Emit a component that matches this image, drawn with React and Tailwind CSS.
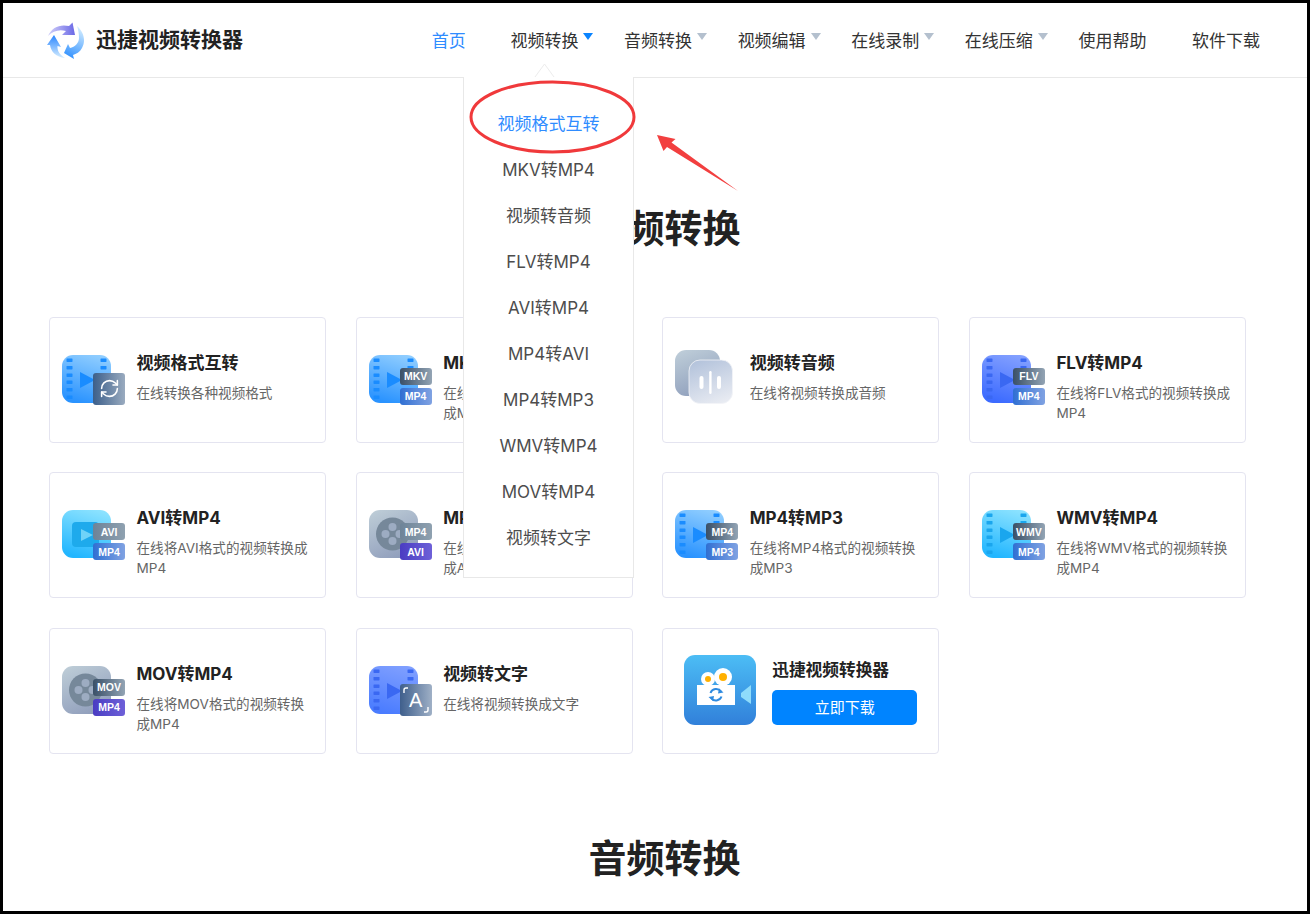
import React from "react";
import { RefreshCw } from "lucide-react";

const FONT = "font-['Inter','Noto_Sans_CJK_SC','Liberation_Sans',sans-serif]";

const palettes = {
  blue: ["#8fcdff", "#2a93ff", "#1a8cff"],
  indigo: ["#83a0ff", "#3c6bff", "#3a68f2"],
  cyan: ["#8be2ff", "#22b6ff", "#1aa6ee"],
  periwinkle: ["#7f9fff", "#4a7cff", "#3a68f2"],
};

function Film({ p }) {
  const [a, b, c] = palettes[p];
  const id = "f" + p;
  const ys = [3.5, 11, 18.5, 25.5, 33, 40.5];
  return (
    <svg width="49" height="48" viewBox="0 0 49 48" className="block">
      <defs>
        <linearGradient id={id} x1="0.7" y1="0" x2="0.4" y2="1">
          <stop offset="0" stopColor={a} />
          <stop offset="1" stopColor={b} />
        </linearGradient>
      </defs>
      <rect width="49" height="48" rx="11" fill={`url(#${id})`} />
      {ys.map((y) => (
        <rect key={y} x="4.5" y={y} width="6" height="3.4" rx="0.6" fill={c} />
      ))}
      {ys.map((y) => (
        <rect key={"r" + y} x="38.5" y={y} width="6" height="3.4" rx="0.6" fill={c} />
      ))}
      <path d="M18 17 L33 25 L18 33 Z" fill={c} />
    </svg>
  );
}

function CyanPlay() {
  return (
    <svg width="49" height="48" viewBox="0 0 49 48" className="block">
      <defs>
        <linearGradient id="cp" x1="0.7" y1="0" x2="0.4" y2="1">
          <stop offset="0" stopColor="#8be2ff" />
          <stop offset="1" stopColor="#22b6ff" />
        </linearGradient>
      </defs>
      <rect width="49" height="48" rx="11" fill="url(#cp)" />
      <rect x="10" y="12" width="27" height="25" rx="4" fill="#1eaaec" />
      <path d="M19 19 L31 25 L19 31 Z" fill="#6fd3f8" />
    </svg>
  );
}

function Reel() {
  return (
    <svg width="49" height="48" viewBox="0 0 49 48" className="block">
      <defs>
        <linearGradient id="rl" x1="0.2" y1="0" x2="0.7" y2="1">
          <stop offset="0" stopColor="#bccbd6" />
          <stop offset="1" stopColor="#8f9dbb" />
        </linearGradient>
      </defs>
      <rect width="49" height="48" rx="11" fill="url(#rl)" />
      <circle cx="23.5" cy="24" r="16.5" fill="#76889a" />
      <circle cx="23.5" cy="17" r="4" fill="#9dacc2" />
      <circle cx="16.5" cy="24" r="4" fill="#9dacc2" />
      <circle cx="23.5" cy="31" r="4" fill="#9dacc2" />
      <circle cx="30.5" cy="24" r="4" fill="#9dacc2" />
    </svg>
  );
}

function AudioIcon() {
  return (
    <svg width="58" height="54" viewBox="0 0 58 54" className="block -mt-[5px]">
      <defs>
        <linearGradient id="a1" x1="0.2" y1="0" x2="0.6" y2="1">
          <stop offset="0" stopColor="#bdccd8" />
          <stop offset="1" stopColor="#8f9fbc" />
        </linearGradient>
        <linearGradient id="a2" x1="0.3" y1="0" x2="0.7" y2="1">
          <stop offset="0" stopColor="#b5c4dc" />
          <stop offset="1" stopColor="#e8ebf2" />
        </linearGradient>
      </defs>
      <rect width="45" height="46" rx="11" fill="url(#a1)" />
      <rect x="14" y="10" width="43.5" height="43.5" rx="11" fill="url(#a2)" stroke="#f2f4f8" strokeWidth="0.8" />
      <rect x="24.5" y="26" width="4" height="13" rx="2" fill="#fff" />
      <rect x="34.2" y="21" width="2.4" height="23" rx="1.2" fill="#fff" />
      <rect x="42" y="26" width="4" height="13" rx="2" fill="#fff" />
    </svg>
  );
}

function Tag({ children, tone, className }) {
  const tones = {
    slate: "bg-gradient-to-r from-[#3a5068] to-[#93a4b4]",
    grey: "bg-gradient-to-r from-[#6d8398] to-[#8fa1b0]",
    blue: "bg-gradient-to-r from-[#2f6fd2] to-[#80a2e2]",
    violet: "bg-gradient-to-r from-[#4a3cc2] to-[#6e60d8]",
  };
  return (
    <div
      className={`absolute left-[31px] w-[32px] h-[17px] rounded-[3px] flex items-center justify-center text-white font-bold text-[10.5px] leading-none font-['Liberation_Sans',sans-serif] ${tones[tone]} ${className}`}
    >
      {children}
    </div>
  );
}

function TextBadge() {
  return (
    <div className="absolute left-[31px] top-[18px] w-[32px] h-[32px] rounded-[3px] bg-gradient-to-r from-[#3f5f8c] to-[#9fb0c6] flex items-center justify-center text-white text-[20px] leading-none font-['Liberation_Sans',sans-serif]">
      A
      <svg className="absolute inset-0" width="32" height="32" viewBox="0 0 32 32" fill="none" stroke="#fff" strokeWidth="1.4">
        <path d="M4 9 V6 Q4 4 6 4 H8" />
        <path d="M28 23 V26 Q28 28 26 28 H24" />
      </svg>
    </div>
  );
}

function RefreshBadge() {
  return (
    <div className="absolute left-[31px] top-[18px] w-[32px] h-[32px] rounded-[3px] bg-gradient-to-r from-[#3c5f8a] to-[#9aabbf] flex items-center justify-center">
      <RefreshCw size={21} color="#fff" strokeWidth={1.8} />
    </div>
  );
}

function Icon({ kind }) {
  const pair = (base, t1, t2, tone1 = "slate", tone2 = "blue") => (
    <>
      {base}
      <Tag tone={tone1} className="top-[13px]">{t1}</Tag>
      <Tag tone={tone2} className="top-[33px]">{t2}</Tag>
    </>
  );
  let inner;
  switch (kind) {
    case "format":
      inner = (<><Film p="blue" /><RefreshBadge /></>);
      break;
    case "mkv":
      inner = pair(<Film p="blue" />, "MKV", "MP4");
      break;
    case "audio":
      inner = <AudioIcon />;
      break;
    case "flv":
      inner = pair(<Film p="indigo" />, "FLV", "MP4");
      break;
    case "avi":
      inner = pair(<CyanPlay />, "AVI", "MP4", "grey");
      break;
    case "m4avi":
      inner = pair(<Reel />, "MP4", "AVI", "grey", "violet");
      break;
    case "m4mp3":
      inner = pair(<Film p="blue" />, "MP4", "MP3");
      break;
    case "wmv":
      inner = pair(<Film p="cyan" />, "WMV", "MP4");
      break;
    case "mov":
      inner = pair(<Reel />, "MOV", "MP4", "slate", "violet");
      break;
    default:
      inner = (<><Film p="periwinkle" /><TextBadge /></>);
  }
  return <div className="relative w-[63px] h-[50px] mt-[6px] shrink-0">{inner}</div>;
}

const cards = [
  ["format", "视频格式互转", "在线转换各种视频格式"],
  ["mkv", "MKV转MP4", "在线将MKV格式的视频转换成MP4"],
  ["audio", "视频转音频", "在线将视频转换成音频"],
  ["flv", "FLV转MP4", "在线将FLV格式的视频转换成MP4"],
  ["avi", "AVI转MP4", "在线将AVI格式的视频转换成MP4"],
  ["m4avi", "MP4转AVI", "在线将MP4格式的视频转换成AVI"],
  ["m4mp3", "MP4转MP3", "在线将MP4格式的视频转换成MP3"],
  ["wmv", "WMV转MP4", "在线将WMV格式的视频转换成MP4"],
  ["mov", "MOV转MP4", "在线将MOV格式的视频转换成MP4"],
  ["text", "视频转文字", "在线将视频转换成文字"],
];

function Card({ kind, title, desc }) {
  return (
    <div className="h-[126px] border border-[#e4e4f0] rounded-[4px] bg-white flex pl-[12px] pt-[31px]">
      <Icon kind={kind} />
      <div className="ml-[11.5px] w-[178px] pt-[2px]">
        <div className="text-[17px] leading-[24px] font-bold text-[#222]">{title}</div>
        <div className="mt-[8px] text-[13.6px] leading-[20px] text-[#666]">{desc}</div>
      </div>
    </div>
  );
}

function PromoIcon() {
  return (
    <svg width="72" height="70" viewBox="0 0 72 70" className="block shrink-0">
      <defs>
        <linearGradient id="pi" x1="0" y1="0" x2="0" y2="1">
          <stop offset="0" stopColor="#4cbdf5" />
          <stop offset="1" stopColor="#3180da" />
        </linearGradient>
      </defs>
      <rect width="72" height="70" rx="11" fill="url(#pi)" />
      <rect x="13" y="30" width="38" height="20" fill="#fff" />
      <circle cx="24" cy="24" r="7" fill="#fff" />
      <circle cx="24" cy="24" r="3" fill="#ffb000" />
      <circle cx="39" cy="22" r="9" fill="#fff" />
      <circle cx="39" cy="22" r="4" fill="#ffb000" />
      <path d="M57 38 L67 30 V49 L57 42 Z" fill="#8fdcfb" />
      <path d="M26.5 38 A6 6 0 0 1 37 36.5" fill="none" stroke="#2f8be0" strokeWidth="2" />
      <path d="M37.5 41.5 A6 6 0 0 1 27 43" fill="none" stroke="#2f8be0" strokeWidth="2" />
      <path d="M35 33.5 L39.5 37.5 L34 38.5 Z" fill="#2f8be0" />
      <path d="M29 46 L24.5 42 L30 41 Z" fill="#2f8be0" />
    </svg>
  );
}

function Logo() {
  return (
    <svg width="38" height="39" viewBox="0 0 38 39" className="block">
      <defs>
        <linearGradient id="l1" x1="0" y1="0.5" x2="1" y2="0.5">
          <stop offset="0" stopColor="#d4d2fa" />
          <stop offset="1" stopColor="#6a68e6" />
        </linearGradient>
        <linearGradient id="l2" x1="0.5" y1="0" x2="0.5" y2="1">
          <stop offset="0" stopColor="#2a86ff" />
          <stop offset="1" stopColor="#d5edff" />
        </linearGradient>
        <linearGradient id="l3" x1="0.6" y1="0" x2="0.3" y2="1">
          <stop offset="0" stopColor="#d2ecff" />
          <stop offset="1" stopColor="#2f90ff" />
        </linearGradient>
      </defs>
      <path d="M1 15 C5 6 13 3 22 5 L25.5 1.5 L28 14 L15 14 L19 10 C12 8 6 10 1 15 Z" fill="url(#l1)" />
      <path d="M7 14 L14 26 L10.5 25 C10 30 13 34 18 37 C9 36 4 31 3 24 L0 24 Z" fill="url(#l2)" />
      <path d="M30 5 C37 11 39 20 35 27 C33 31 29 33 26 34 L27 38 L17 32 L21 23 L23 27 C28 26 32 22 32 17 C32 12 31 8 30 5 Z" fill="url(#l3)" />
    </svg>
  );
}

const nav = [
  ["视频转换", true, true],
  ["音频转换", true],
  ["视频编辑", true],
  ["在线录制", true],
  ["在线压缩", true],
  ["使用帮助"],
  ["软件下载"],
];

const menu = ["视频格式互转", "MKV转MP4", "视频转音频", "FLV转MP4", "AVI转MP4", "MP4转AVI", "MP4转MP3", "WMV转MP4", "MOV转MP4", "视频转文字"];

export default function App() {
  return (
    <div className={`relative h-[914px] w-[1310px] border-[3px] border-black bg-white overflow-hidden ${FONT}`}>
      <header className="h-[75px] border-b border-[#e8e8e8] flex items-center pl-[44px] pr-[47px]">
        <Logo />
        <span className="ml-[11px] text-[21px] font-bold text-[#222]">迅捷视频转换器</span>
        <nav className="ml-auto mt-[4px] flex items-center gap-[45.6px] text-[17px] text-[#333]">
          <a className="text-[#2f8cff] mr-[-1px]">首页</a>
          {nav.map(([label, caret, active]) => (
            <a key={label} className="relative">
              {label}
              {caret && (
                <svg width="10" height="7" viewBox="0 0 10 7" className="absolute left-[73px] top-[3.5px]">
                  <path d="M0 0 H10 L5 7 Z" fill={active ? "#0a84ff" : "#b4c0ce"} />
                </svg>
              )}
            </a>
          ))}
        </nav>
      </header>

      <main className="pl-[46px] pr-[61px]">
        <h2 className="mt-[123px] h-[54px] leading-[54px] text-center text-[38px] font-bold text-[#222] mr-[-34px]">视频转换</h2>
        <div className="mt-[61.75px] grid grid-cols-4 gap-x-[29.5px] gap-y-[29.5px]">
          {cards.map(([k, t, d]) => (
            <Card key={k} kind={k} title={t} desc={d} />
          ))}
          <div className="h-[126px] border border-[#e4e4f0] rounded-[4px] bg-white flex pl-[21px] pt-[26px]">
            <PromoIcon />
            <div className="ml-[16px]">
              <div className="text-[16.7px] leading-[24px] font-bold text-[#222] mt-[3px]">迅捷视频转换器</div>
              <button className="mt-[8px] pt-[2px] w-[145px] h-[35px] rounded-[5px] bg-[#0084ff] text-white text-[15px] block">立即下载</button>
            </div>
          </div>
        </div>
        <h2 className="mt-[77px] h-[54px] leading-[54px] text-center text-[38px] font-bold text-[#222] mr-[-34px]">音频转换</h2>
      </main>

      <div className="absolute left-[460px] top-[74px] w-[171px] h-[501px] bg-white border border-t-0 border-[#e8e8e8] pt-[23.5px] text-[17px] text-[#4d4d4d] text-center">
        {menu.map((m, i) => (
          <div key={m} className={`h-[46.1px] leading-[46px] ${i === 0 ? "text-[#2f8cff]" : ""}`}>{m}</div>
        ))}
      </div>

      <svg className="absolute left-0 top-0 pointer-events-none" width="1304" height="908" viewBox="3 3 1304 908" fill="none">
        <path d="M535 77 L544.5 64 L554 77" fill="#fff" stroke="#ececec" strokeWidth="1" />
        <ellipse cx="552.5" cy="117" rx="81.5" ry="35" stroke="#f0393b" strokeWidth="3" />
        <path d="M657 135 L675.5 139 L671.5 142.5 L738 191 L667 147 L663.5 151 Z" fill="#f23f3f" />
      </svg>
    </div>
  );
}
